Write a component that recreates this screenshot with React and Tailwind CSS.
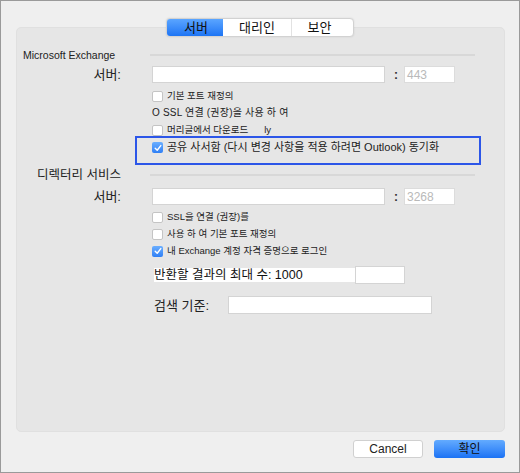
const font = "font-['Liberation_Sans','Noto_Sans_CJK_KR',sans-serif]";

function Checkbox({ checked }) {
  if (checked) {
    return (
      <span className="flex h-[11px] w-[11px] shrink-0 items-center justify-center rounded-[2px] bg-gradient-to-b from-[#6aaeff] to-[#2f7ff5]">
        <svg width="8" height="8" viewBox="0 0 8 8" fill="none">
          <path d="M1.2 4.2 L3.2 6.2 L6.8 1.6" stroke="white" strokeWidth="1.4" strokeLinecap="round" strokeLinejoin="round" />
        </svg>
      </span>
    );
  }
  return <span className="h-[11px] w-[11px] shrink-0 rounded-[2px] border border-[#c4c4c4] bg-white" />;
}

function CheckRow({ checked, children, className = "" }) {
  return (
    <div className={`flex h-[12px] items-center gap-[4px] pl-[135px] ${className}`}>
      <Checkbox checked={checked} />
      <span className="text-[9.5px] leading-none text-[#222]">{children}</span>
    </div>
  );
}

function ServerRow({ port, className = "" }) {
  return (
    <div className={`flex h-[17px] items-center ${className}`}>
      <span className="w-[104px] text-right text-[13px] leading-none text-[#222]">서버:</span>
      <div className="ml-[31px] h-[17px] w-[233px] border border-[#d4d4d4] bg-white" />
      <span className="ml-[9px] w-[10px] text-[12px] font-bold leading-none text-[#333]">:</span>
      <div className="flex h-[17px] w-[51px] items-center border border-[#dcdcdc] bg-white pl-[2px] text-[12px] text-[#b9b9b9]">
        {port}
      </div>
    </div>
  );
}

function Section({ title, titleClass, className = "" }) {
  return (
    <div className={`flex items-center ${className}`}>
      <span className={`leading-none text-[#222] ${titleClass}`}>{title}</span>
      <div className="ml-auto mr-[29px] h-[2px] w-[325px] bg-[#d8d8d8]" />
    </div>
  );
}

export default function App() {
  return (
    <div className={`flex h-[473px] w-[520px] flex-col border border-[#9a9a9a] bg-[#efefef] ${font}`}>
      {/* Tabs */}
      <div className="relative z-10 mt-[17px] flex justify-center">
        <div className="flex h-[19px] overflow-hidden rounded-[4px] border border-[#d2d2d2] bg-white text-[13px] leading-none text-[#111] shadow-[0_0_2px_rgba(0,0,0,0.1)]">
          <div className="flex w-[56px] items-center justify-center bg-gradient-to-b from-[#5aa5ff] to-[#1c74f4] pl-[2px]">
            서버
          </div>
          <div className="flex w-[69px] items-center justify-center border-r border-[#e2e2e2]">대리인</div>
          <div className="flex w-[61px] items-center justify-center pr-[6px]">보안</div>
        </div>
      </div>

      {/* Panel */}
      <div className="-mt-[10px] ml-[15px] mr-[14px] h-[405px] rounded-[5px] border border-[#e0e0e0] bg-[#e6e6e6]">
        <Section title="Microsoft Exchange" titleClass="pl-[6px] text-[10.5px]" className="mt-[19px] h-[16px]" />
        <ServerRow port="443" className="mt-[3px]" />
        <CheckRow className="mt-[7px]">기본 포트 재정의</CheckRow>
        <div className="mt-[5px] flex h-[12px] items-center pl-[135px] text-[10px] leading-none tracking-[0.2px] text-[#222]">
          O SSL 연결 (권장)을 사용 하 여
        </div>
        <CheckRow className="mt-[5px]">머리글에서 다운로드&nbsp;&nbsp;&nbsp;&nbsp;&nbsp;&nbsp;ly</CheckRow>

        <div className="ml-[118px] mt-[0px] h-[29px] w-[346px] border-2 border-[#2c56e8] pt-[4px]">
          <div className="flex items-center gap-[4px] pl-[15px]">
            <Checkbox checked />
            <span className="text-[11px] leading-none text-[#222]">
              공유 사서함 (다시 변경 사항을 적용 하려면 Outlook) 동기화
            </span>
          </div>
        </div>

        <Section title="디렉터리 서비스" titleClass="pl-[20px] text-[12.5px]" className="mt-[2px] h-[16px]" />
        <ServerRow port="3268" className="mt-[5px]" />
        <CheckRow className="mt-[6px]">SSL을 연결 (권장)를</CheckRow>
        <CheckRow className="mt-[5px]">사용 하 여 기본 포트 재정의</CheckRow>
        <CheckRow checked className="mt-[5px]">내 Exchange 계정 자격 증명으로 로그인</CheckRow>

        <div className="mt-[9px] flex h-[18px] items-center pl-[137px]">
          <span className="flex h-[14px] w-[201px] items-center bg-white text-[12.5px] leading-none text-[#111]">
            반환할 결과의 최대 수: 1000
          </span>
          <div className="h-[18px] w-[50px] border border-[#d4d4d4] bg-white" />
        </div>

        <div className="mt-[12px] flex h-[18px] items-center pl-[137px]">
          <span className="w-[74px] text-[13px] leading-none text-[#222]">검색 기준:</span>
          <div className="h-[18px] w-[204px] border border-[#d4d4d4] bg-white" />
        </div>
      </div>

      {/* Buttons */}
      <div className="mt-[8px] flex justify-end gap-[11px] pr-[14px]">
        <button className="flex h-[18px] w-[70px] items-center justify-center rounded-[3px] border border-[#d0d0d0] bg-white text-[12px] leading-none text-[#222]">
          Cancel
        </button>
        <button className="flex h-[18px] w-[71px] items-center justify-center rounded-[3px] bg-gradient-to-b from-[#63abff] to-[#1a72f4] text-[12px] leading-none text-[#111]">
          확인
        </button>
      </div>
    </div>
  );
}
